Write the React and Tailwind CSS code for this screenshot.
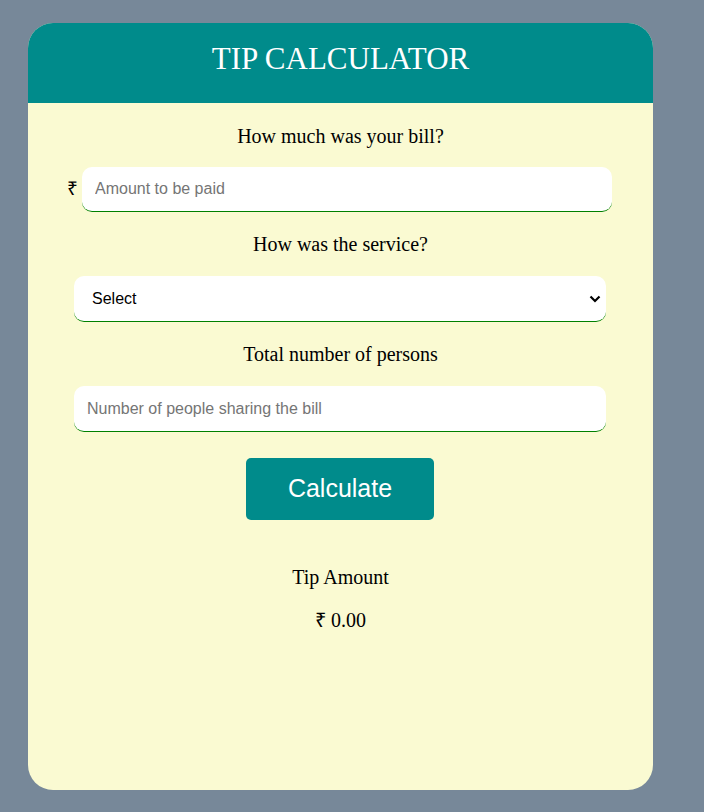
import React from "react";

export default function App() {
  return (
    <div className="min-h-[812px] w-[704px] bg-[#778899] pt-[23px] pl-[28px]" style={{ fontFamily: '"Liberation Serif", serif' }}>
      <div className="w-[625px] h-[767px] rounded-[25px] overflow-hidden bg-[#fafad2] flex flex-col">
        <div className="h-[80px] bg-[#008b8b] flex justify-center pt-[18px]">
          <h1 className="text-white text-[31px] leading-[36px] font-['Liberation_Serif',serif]">TIP CALCULATOR</h1>
        </div>
        <div className="flex flex-col items-center pt-[22px]">
          <p className="text-[20px] leading-[23px] text-black font-['Liberation_Serif',serif]">How much was your bill?</p>
          <div className="mt-[19px] flex items-center w-[550px] ml-[-7px]">
            <span className="text-[19px] w-[20px] pl-[5px] text-black font-['Liberation_Sans',sans-serif]">₹</span>
            <input
              type="text"
              placeholder="Amount to be paid"
              className="w-[530px] h-[45px] bg-white rounded-[10px] border-b border-[#008000] px-[13px] text-[16px] outline-none placeholder:text-[#757575] font-['Liberation_Sans',sans-serif]"
            />
          </div>
          <p className="mt-[21px] text-[20px] leading-[23px] text-black font-['Liberation_Serif',serif]">How was the service?</p>
          <div className="mt-[20px] relative w-[532px] h-[46px] bg-white rounded-[10px] border-b border-[#008000] flex items-center pl-[18px] ml-[-1px]">
            <span className="text-[16px] text-black font-['Liberation_Sans',sans-serif]">Select</span>
            <svg className="absolute right-[5px] top-1/2 -translate-y-1/2" width="12" height="12" viewBox="0 0 12 12">
              <path d="M1.5 3.5 L6 8 L10.5 3.5" fill="none" stroke="black" strokeWidth="2.2" />
            </svg>
          </div>
          <p className="mt-[21px] text-[20px] leading-[23px] text-black font-['Liberation_Serif',serif]">Total number of persons</p>
          <input
            type="text"
            placeholder="Number of people sharing the bill"
            className="mt-[20px] ml-[-1px] w-[532px] h-[46px] bg-white rounded-[10px] border-b border-[#008000] px-[13px] text-[16px] outline-none placeholder:text-[#757575] font-['Liberation_Sans',sans-serif]"
          />
          <button className="mt-[26px] ml-[-1px] w-[188px] h-[62px] bg-[#008b8b] rounded-[5px] text-white text-[25px] font-['Liberation_Sans',sans-serif]">
            Calculate
          </button>
          <p className="mt-[46px] text-[20px] leading-[23px] text-black font-['Liberation_Serif',serif]">Tip Amount</p>
          <p className="mt-[20px] text-[20px] leading-[23px] text-black font-['Liberation_Serif',serif]">₹ 0.00</p>
        </div>
      </div>
    </div>
  );
}
